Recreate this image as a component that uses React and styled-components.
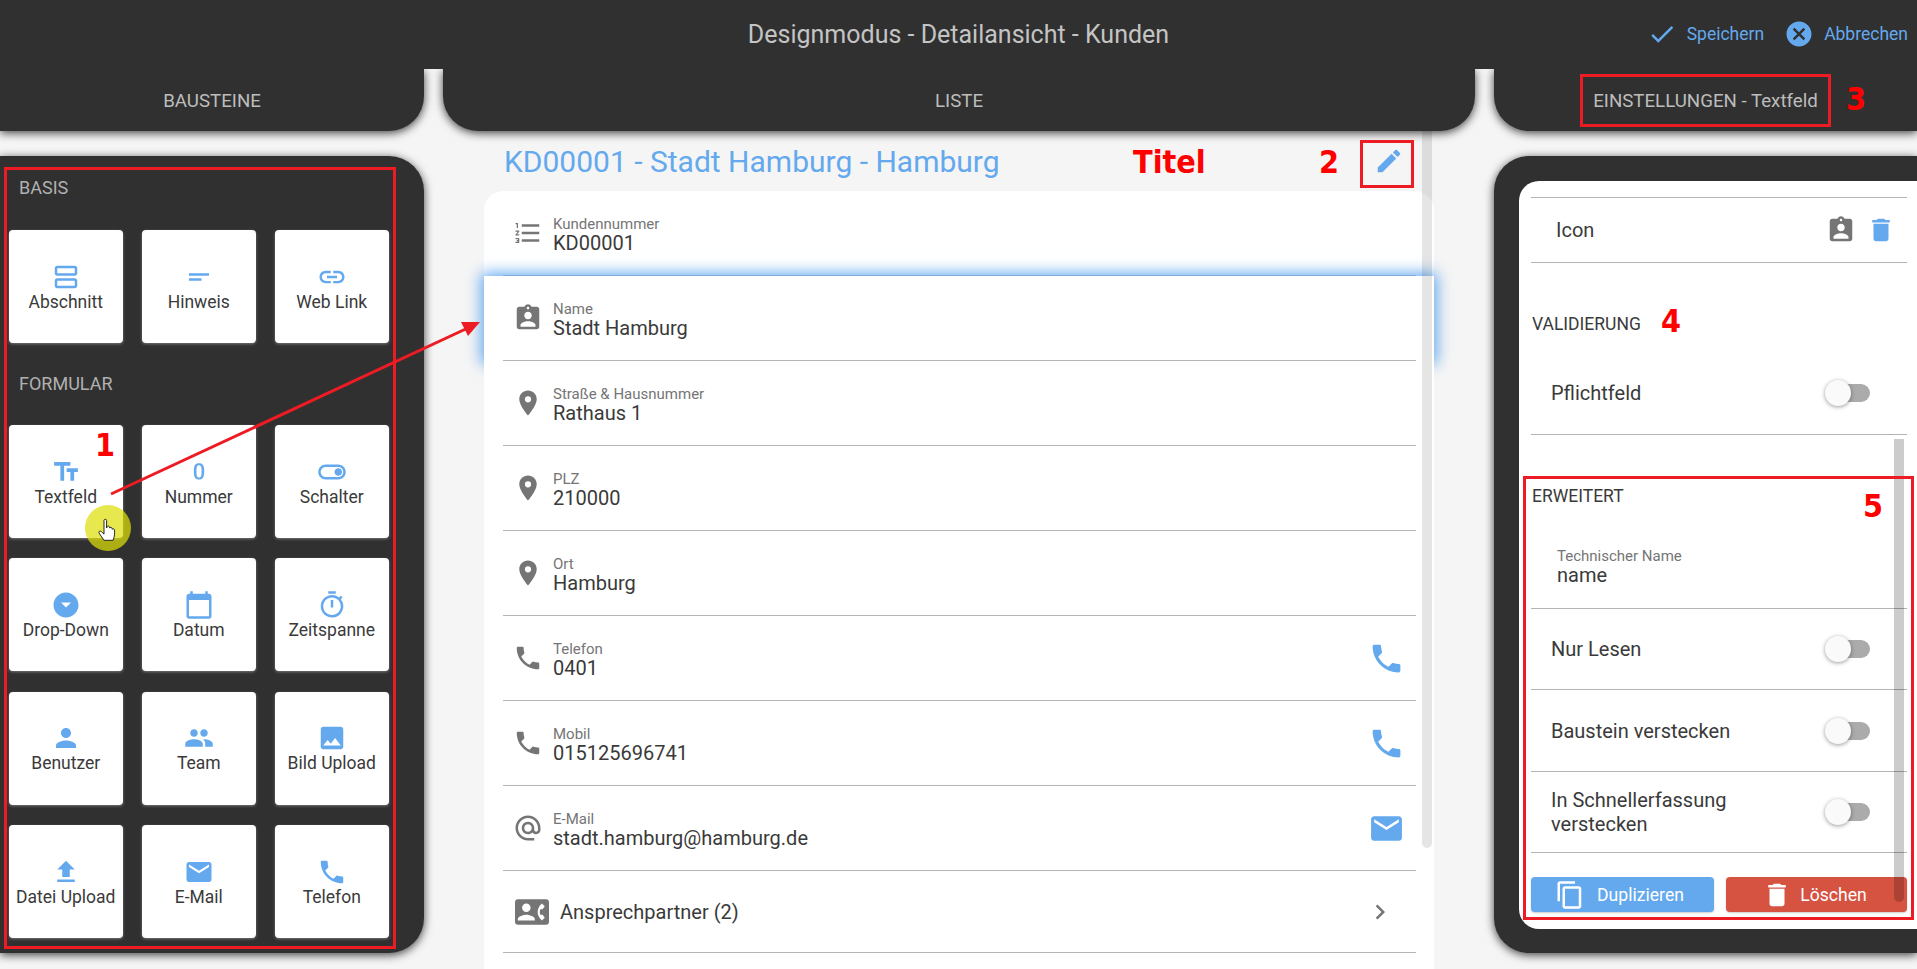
import React from 'react';
import styled, { createGlobalStyle } from 'styled-components';
import {
  MdOutlineViewAgenda,
  MdShortText,
  MdLink,
  MdTextFields,
  MdExposureZero,
  MdOutlineToggleOn,
  MdArrowDropDownCircle,
  MdCalendarToday,
  MdOutlineTimer,
  MdPerson,
  MdPeople,
  MdImage,
  MdFileUpload,
  MdEmail,
  MdPhone,
  MdEdit,
  MdAssignmentInd,
  MdPlace,
  MdFormatListNumbered,
  MdAlternateEmail,
  MdContactPhone,
  MdChevronRight,
  MdDelete,
  MdCheck,
  MdCancel,
  MdOutlineContentCopy
} from 'react-icons/md';

const DARK = '#303030';
const BLUE = '#64a9ee';
const RED = '#ed1c24';
const TEXT = '#3a3a3a';
const SIDE = 35;

const GlobalStyle = createGlobalStyle`
  html, body {
    margin: 0;
    padding: 0;
    height: 100%;
    overflow: hidden;
  }
  body {
    font-family: Roboto, "Liberation Sans", sans-serif;
    color: ${TEXT};
    background: #f5f5f5;
  }
`;

const Page = styled.div`
  position: relative;
  height: 100vh;
  overflow: hidden;
  background: #f5f5f5;
`;

const TopBar = styled.header`
  position: relative;
  z-index: 3;
  height: 69px;
  box-sizing: border-box;
  padding-bottom: 1px;
  background: ${DARK};
  display: grid;
  grid-template-columns: 1fr auto 1fr;
  align-items: center;
`;

const PageTitle = styled.h1`
  margin: 0;
  font-size: 25px;
  font-weight: 400;
  color: #c4c4c4;
`;

const Actions = styled.div`
  display: flex;
  justify-content: flex-end;
  align-items: center;
  gap: 20px;
  padding: 0 9px 1px 0;
`;

const Action = styled.div`
  display: flex;
  align-items: center;
  gap: 10px;
  font-size: 17.5px;
  color: ${BLUE};
  svg {
    font-size: 30px;
  }
`;

const Columns = styled.div`
  display: grid;
  grid-template-columns: 424px 1032px 423px;
  column-gap: 19px;
`;

const TabRow = styled(Columns)`
  position: relative;
  z-index: 2;
  height: 62px;
`;

const Tab = styled.div`
  display: flex;
  align-items: center;
  justify-content: center;
  padding-top: 1px;
  background: ${DARK};
  color: #bdbdbd;
  font-size: 18.7px;
  box-shadow: 0 2px 10px rgba(0, 0, 0, 0.75);
  border-bottom-left-radius: ${p => (p.$side === 'left' ? 0 : SIDE)}px;
  border-bottom-right-radius: ${p => (p.$side === 'right' ? 0 : SIDE)}px;
`;

const SidePanel = styled.aside`
  margin-top: 25px;
  height: 797px;
  background: ${DARK};
  box-shadow: 0 2px 10px rgba(0, 0, 0, 0.75);
  border-top-left-radius: ${p => (p.$side === 'left' ? 0 : SIDE)}px;
  border-bottom-left-radius: ${p => (p.$side === 'left' ? 0 : SIDE)}px;
  border-top-right-radius: ${p => (p.$side === 'right' ? 0 : SIDE)}px;
  border-bottom-right-radius: ${p => (p.$side === 'right' ? 0 : SIDE)}px;
`;

const Palette = styled(SidePanel)`
  padding: 21px 0 0 9px;
  box-sizing: border-box;
`;

const PaletteHeading = styled.h3`
  margin: ${p => p.$top}px 0 ${p => p.$bottom}px 10px;
  font-size: 18px;
  line-height: 22px;
  font-weight: 400;
  color: #b0b0b0;
`;

const BlockGrid = styled.div`
  display: grid;
  grid-template-columns: repeat(3, 113.5px);
  grid-auto-rows: 113px;
  column-gap: 19.5px;
  row-gap: 20.4px;
`;

const Block = styled.div`
  background: #fff;
  border-radius: 4px;
  box-shadow: 0 1px 3px rgba(255, 255, 255, 0.35);
  display: flex;
  flex-direction: column;
  align-items: center;
  justify-content: center;
  padding-top: 1px;
  box-sizing: border-box;
  font-size: 17.5px;
  line-height: 21px;
  color: ${TEXT};
  white-space: nowrap;
  svg {
    font-size: 30px;
    color: ${BLUE};
    display: block;
  }
`;

const ListColumn = styled.main`
  position: relative;
  padding: 0 41px;
`;

const Scrollbar = styled.div`
  position: absolute;
  z-index: 1;
  top: ${p => p.$top}px;
  left: ${p => p.$left}px;
  height: ${p => p.$height}px;
  width: 10px;
  border-radius: 0 0 5px 5px;
  background: ${p => p.$color};
`;

const TitleRow = styled.div`
  height: 60px;
  display: flex;
  align-items: center;
  justify-content: space-between;
  padding: 0 30px 0 20px;
  svg {
    font-size: 30px;
    color: ${BLUE};
  }
`;

const RecordTitle = styled.h2`
  margin: 0;
  font-size: 30px;
  font-weight: 400;
  color: ${BLUE};
`;

const RecordCard = styled.section`
  background: #fff;
  border-radius: 20px 20px 0 0;
  height: 800px;
`;

const Row = styled.div`
  position: relative;
  background: #fff;
  padding: 0 18px 0 19px;
  border-radius: ${p => (p.$first ? '20px 20px 0 0' : '0')};
  box-shadow: ${p => (p.$active ? `0 0 14px 3px ${BLUE}` : 'none')};
`;

const RowInner = styled.div`
  height: ${p => p.$height || 85}px;
  box-sizing: border-box;
  border-bottom: 1px solid #b4b4b4;
  display: flex;
  align-items: center;
  padding: 0 14px 0 10px;
  gap: 10px;
  svg {
    font-size: 30px;
    flex: none;
  }
`;

const GreyIcon = styled.span`
  display: flex;
  color: #757575;
`;

const BlueIcon = styled.span`
  display: flex;
  color: ${BLUE};
`;

const RowAction = styled(BlueIcon)`
  margin-right: -3px;
  svg {
    font-size: 37px;
  }
`;

const WideIcon = styled(GreyIcon)`
  margin-left: 2px;
  svg {
    font-size: 34px;
  }
`;

const FieldText = styled.div`
  flex: 1;
  min-width: 0;
  padding-top: 3px;
`;

const FieldLabel = styled.div`
  font-size: 15px;
  line-height: 16px;
  color: #757575;
`;

const FieldValue = styled.div`
  font-size: 20px;
  line-height: 22px;
  color: ${TEXT};
`;

const LinkText = styled.div`
  flex: 1;
  font-size: 20px;
  line-height: 22px;
  color: ${TEXT};
  margin-left: 1px;
`;

const Chevron = styled(GreyIcon)`
  margin-right: 7px;
`;

const Settings = styled(SidePanel)`
  padding: 25px 0 24px 25px;
  box-sizing: border-box;
`;

const SettingsInner = styled.div`
  height: 100%;
  box-sizing: border-box;
  background: #fff;
  border-radius: 20px 0 0 20px;
  padding: 16px 10px 0 12px;
`;

const IconRow = styled.div`
  height: 66px;
  box-sizing: border-box;
  border-top: 1px solid #b4b4b4;
  border-bottom: 1px solid #b4b4b4;
  display: flex;
  align-items: center;
  padding: 0 11px 0 25px;
  gap: 10px;
  font-size: 20px;
  svg {
    font-size: 30px;
  }
`;

const Grow = styled.div`
  flex: 1;
`;

const SectionHeading = styled.h4`
  margin: ${p => p.$top}px 0 ${p => p.$bottom}px 1px;
  font-size: 17.5px;
  line-height: 22px;
  font-weight: 400;
  color: ${TEXT};
`;

const ToggleRow = styled.div`
  height: ${p => p.$height || 81.4}px;
  box-sizing: border-box;
  border-bottom: 1px solid #b4b4b4;
  display: flex;
  align-items: center;
  justify-content: space-between;
  padding: 0 37px 0 20px;
  font-size: 20px;
  line-height: 24px;
`;

const ToggleLabel = styled.div`
  width: 200px;
`;

const Toggle = styled.div`
  position: relative;
  width: 45px;
  height: 18px;
  flex: none;
  &::before {
    content: '';
    position: absolute;
    left: 5px;
    right: 0;
    top: 0;
    bottom: 0;
    border-radius: 9px;
    background: #ababab;
  }
  &::after {
    content: '';
    position: absolute;
    left: 0;
    top: -4px;
    width: 26px;
    height: 26px;
    border-radius: 50%;
    background: #fafafa;
    box-shadow: 0 1px 4px rgba(0, 0, 0, 0.4);
  }
`;

const NameField = styled.div`
  height: 102px;
  box-sizing: border-box;
  border-bottom: 1px solid #b4b4b4;
  padding: 41px 0 0 26px;
`;

const ButtonRow = styled.div`
  display: flex;
  gap: 12px;
  margin-top: 24px;
`;

const Button = styled.button`
  flex: 1;
  height: 35px;
  border: 0;
  border-radius: 4px;
  padding: 0 ${p => p.$shift}px 0 0;
  display: flex;
  align-items: center;
  justify-content: center;
  gap: ${p => p.$gap}px;
  background: ${p => p.$color};
  color: #fff;
  font-family: inherit;
  font-size: 17.6px;
  box-shadow: 0 1px 2px rgba(0, 0, 0, 0.2);
  svg {
    font-size: 30px;
  }
`;

/* annotations drawn over the screenshot */
const Overlay = styled.div`
  position: absolute;
  z-index: 5;
  inset: 0;
  pointer-events: none;
`;

const Marker = styled.div`
  position: absolute;
  left: ${p => p.$x}px;
  top: ${p => p.$y}px;
  width: ${p => p.$w}px;
  height: ${p => p.$h}px;
  box-sizing: border-box;
  border: 3px solid ${RED};
`;

const Note = styled.div`
  position: absolute;
  left: ${p => p.$x}px;
  top: ${p => p.$y}px;
  transform: translateY(-50%);
  font-family: "DejaVu Sans Condensed", "DejaVu Sans", sans-serif;
  font-stretch: condensed;
  font-weight: 700;
  font-size: 32px;
  line-height: 1;
  color: #f00;
`;

const ArrowLayer = styled.svg`
  position: absolute;
  left: 0;
  top: 0;
`;

const CursorGlow = styled.div`
  position: absolute;
  left: 85px;
  top: 505px;
  width: 46px;
  height: 46px;
  border-radius: 50%;
  background: rgba(222, 222, 10, 0.72);
`;

const blocksBasis = [
  { icon: MdOutlineViewAgenda, label: 'Abschnitt' },
  { icon: MdShortText, label: 'Hinweis' },
  { icon: MdLink, label: 'Web Link' }
];

const blocksForm = [
  { icon: MdTextFields, label: 'Textfeld' },
  { icon: MdExposureZero, label: 'Nummer' },
  { icon: MdOutlineToggleOn, label: 'Schalter' },
  { icon: MdArrowDropDownCircle, label: 'Drop-Down' },
  { icon: MdCalendarToday, label: 'Datum' },
  { icon: MdOutlineTimer, label: 'Zeitspanne' },
  { icon: MdPerson, label: 'Benutzer' },
  { icon: MdPeople, label: 'Team' },
  { icon: MdImage, label: 'Bild Upload' },
  { icon: MdFileUpload, label: 'Datei Upload' },
  { icon: MdEmail, label: 'E-Mail' },
  { icon: MdPhone, label: 'Telefon' }
];

const fields = [
  { icon: MdFormatListNumbered, label: 'Kundennummer', value: 'KD00001' },
  { icon: MdAssignmentInd, label: 'Name', value: 'Stadt Hamburg', active: true },
  { icon: MdPlace, label: 'Straße & Hausnummer', value: 'Rathaus 1' },
  { icon: MdPlace, label: 'PLZ', value: '210000' },
  { icon: MdPlace, label: 'Ort', value: 'Hamburg' },
  { icon: MdPhone, label: 'Telefon', value: '0401', action: MdPhone },
  { icon: MdPhone, label: 'Mobil', value: '015125696741', action: MdPhone },
  { icon: MdAlternateEmail, label: 'E-Mail', value: 'stadt.hamburg@hamburg.de', action: MdEmail }
];

function Blocks({ items }) {
  return (
    <BlockGrid>
      {items.map(({ icon: Icon, label }) => (
        <Block key={label}>
          <Icon />
          {label}
        </Block>
      ))}
    </BlockGrid>
  );
}

function Annotations() {
  return (
    <Overlay>
      <Marker $x={4} $y={167} $w={392} $h={782} />
      <Marker $x={1360} $y={140} $w={54} $h={48} />
      <Marker $x={1580} $y={74} $w={251} $h={53} />
      <Marker $x={1523} $y={476} $w={391} $h={444} />
      <Note $x={1133} $y={162}>Titel</Note>
      <Note $x={95} $y={445}>1</Note>
      <Note $x={1319} $y={162}>2</Note>
      <Note $x={1846} $y={99}>3</Note>
      <Note $x={1661} $y={321}>4</Note>
      <Note $x={1863} $y={506}>5</Note>
      <ArrowLayer width="1917" height="969">
        <line x1="111" y1="494" x2="470" y2="327" stroke={RED} strokeWidth="3" />
        <polygon points="480,322 461,322 468,336" fill={RED} />
      </ArrowLayer>
      <CursorGlow />
      <ArrowLayer width="1917" height="969">
        <path
          d="M104 520.5c0-1.6 2.6-1.6 2.6 0v7.5l.4-1.2c.6-1.2 2.4-.9 2.5.4l.1.9c.5-1.2 2.3-1 2.4.4l.1.8c.7-.9 2.3-.5 2.4.8.2 3 .1 5.6-.6 7.6l-.8 2.6h-9.2l-4.8-7.2c-.9-1.5 1-2.8 2.2-1.6l2.7 2.6z"
          fill="#fff"
          stroke="#111"
          strokeWidth="0.9"
          strokeLinejoin="round"
        />
      </ArrowLayer>
    </Overlay>
  );
}

export default function App() {
  return (
    <Page>
      <GlobalStyle />
      <TopBar>
        <div />
        <PageTitle>Designmodus - Detailansicht - Kunden</PageTitle>
        <Actions>
          <Action><MdCheck />Speichern</Action>
          <Action><MdCancel />Abbrechen</Action>
        </Actions>
      </TopBar>

      <TabRow>
        <Tab $side="left">BAUSTEINE</Tab>
        <Tab>LISTE</Tab>
        <Tab $side="right">EINSTELLUNGEN - Textfeld</Tab>
      </TabRow>

      <Columns>
        <Palette $side="left">
          <PaletteHeading $top={0} $bottom={31}>BASIS</PaletteHeading>
          <Blocks items={blocksBasis} />
          <PaletteHeading $top={30} $bottom={30}>FORMULAR</PaletteHeading>
          <Blocks items={blocksForm} />
        </Palette>

        <ListColumn>
          <Scrollbar $top={0} $left={979} $height={717} $color="rgba(0, 0, 0, 0.1)" />
          <TitleRow>
            <RecordTitle>KD00001 - Stadt Hamburg - Hamburg</RecordTitle>
            <MdEdit />
          </TitleRow>
          <RecordCard>
            {fields.map(({ icon: Icon, label, value, active, action: ActionIcon }, i) => (
              <Row key={label} $active={active} $first={i === 0}>
                <RowInner>
                  <GreyIcon><Icon /></GreyIcon>
                  <FieldText>
                    <FieldLabel>{label}</FieldLabel>
                    <FieldValue>{value}</FieldValue>
                  </FieldText>
                  {ActionIcon && <RowAction><ActionIcon /></RowAction>}
                </RowInner>
              </Row>
            ))}
            <Row>
              <RowInner $height={82}>
                <WideIcon><MdContactPhone /></WideIcon>
                <LinkText>Ansprechpartner (2)</LinkText>
                <Chevron><MdChevronRight /></Chevron>
              </RowInner>
            </Row>
          </RecordCard>
        </ListColumn>

        <Settings $side="right">
          <SettingsInner>
            <IconRow>
              Icon
              <Grow />
              <GreyIcon><MdAssignmentInd /></GreyIcon>
              <BlueIcon><MdDelete /></BlueIcon>
            </IconRow>
            <SectionHeading $top={50} $bottom={16}>VALIDIERUNG</SectionHeading>
            <ToggleRow $height={84}>
              Pflichtfeld
              <Toggle />
            </ToggleRow>
            <SectionHeading $top={50} $bottom={0}>ERWEITERT</SectionHeading>
            <NameField>
              <FieldLabel>Technischer Name</FieldLabel>
              <FieldValue>name</FieldValue>
            </NameField>
            <ToggleRow>Nur Lesen<Toggle /></ToggleRow>
            <ToggleRow>Baustein verstecken<Toggle /></ToggleRow>
            <ToggleRow>
              <ToggleLabel>In Schnellerfassung verstecken</ToggleLabel>
              <Toggle />
            </ToggleRow>
            <ButtonRow>
              <Button $color="#64a9ee" $gap={12} $shift={6}><MdOutlineContentCopy />Duplizieren</Button>
              <Button $color="#d65342" $gap={8} $shift={4}><MdDelete />Löschen</Button>
            </ButtonRow>
          </SettingsInner>
          <Scrollbar $top={439} $left={1894} $height={463} $color="rgba(0, 0, 0, 0.2)" />
        </Settings>
      </Columns>

      <Annotations />
    </Page>
  );
}
